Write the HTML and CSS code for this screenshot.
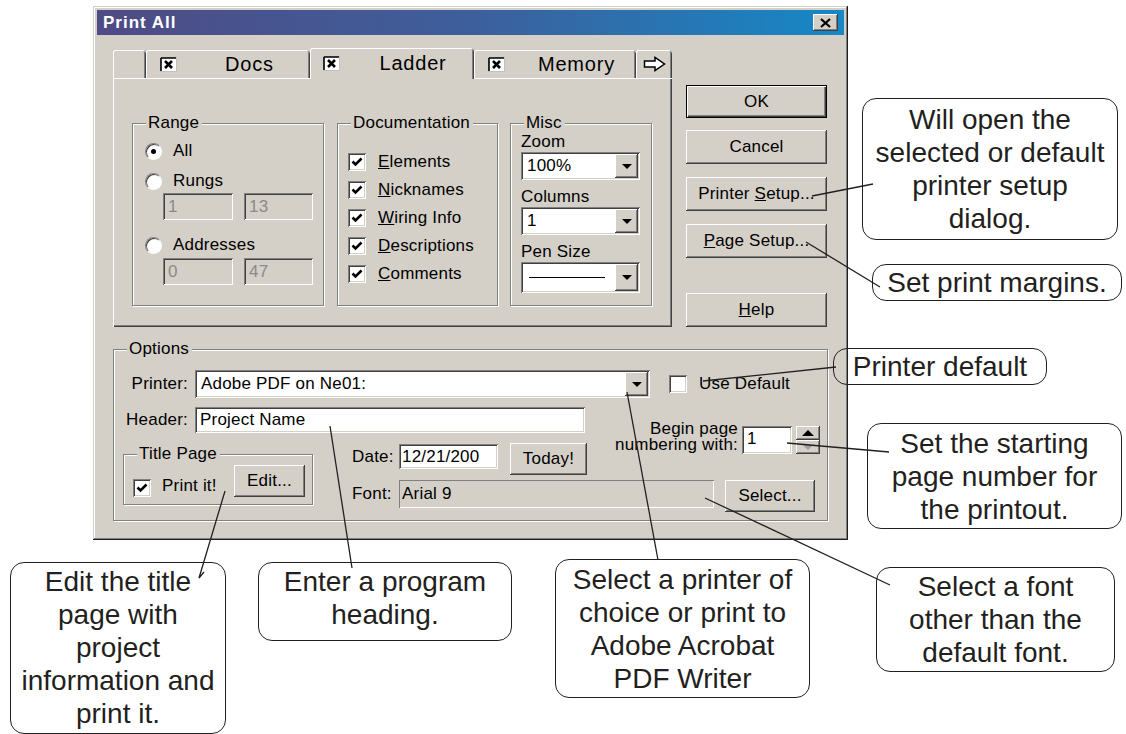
FILE: index.html
```html
<!DOCTYPE html>
<html lang="en">
<head>
  <meta charset="UTF-8" />
  <title>Print All</title>
  <link rel="stylesheet" href="styles.css">
</head>
<body>
<div class="stage">
  <div class="dialog">
    <div class="titlebar">
      <span class="title">Print All</span>
      <span class="close-btn">
        <svg width="11" height="10" viewBox="0 0 11 10"><path d="M1 1 L10 9 M10 1 L1 9" stroke="#000" stroke-width="2.2"/></svg>
      </span>
    </div>

    <div class="dialog-body">
      <div class="top-section">
        <div class="tabs">
          <div class="tab-strip">
            <div class="tab tab-blank"></div>
            <div class="tab tab-docs">
              <span class="tab-check"><svg width="17" height="15" viewBox="0 0 17 15"><rect x="0.5" y="0.5" width="16" height="14" fill="#fff" stroke="#c0c0c0"/><path d="M1 1 H16 M1 1 V14" stroke="#000" stroke-width="1.6"/><path d="M5 4 L12 11 M12 4 L5 11" stroke="#000" stroke-width="2.6"/></svg></span>
              <span class="tab-label">Docs</span>
            </div>
            <div class="tab tab-active">
              <span class="tab-check"><svg width="17" height="15" viewBox="0 0 17 15"><rect x="0.5" y="0.5" width="16" height="14" fill="#fff" stroke="#c0c0c0"/><path d="M1 1 H16 M1 1 V14" stroke="#000" stroke-width="1.6"/><path d="M5 4 L12 11 M12 4 L5 11" stroke="#000" stroke-width="2.6"/></svg></span>
              <span class="tab-label">Ladder</span>
            </div>
            <div class="tab tab-memory">
              <span class="tab-check"><svg width="17" height="15" viewBox="0 0 17 15"><rect x="0.5" y="0.5" width="16" height="14" fill="#fff" stroke="#c0c0c0"/><path d="M1 1 H16 M1 1 V14" stroke="#000" stroke-width="1.6"/><path d="M5 4 L12 11 M12 4 L5 11" stroke="#000" stroke-width="2.6"/></svg></span>
              <span class="tab-label">Memory</span>
            </div>
            <div class="tab tab-arrow">
              <svg width="24" height="16" viewBox="0 0 24 16"><path d="M1.5 5 H12 V1.5 L21.5 8 L12 14.5 V11 H1.5 Z" fill="#fff" stroke="#000" stroke-width="1.5"/></svg>
            </div>
          </div>

          <div class="tab-panel">
            <div class="group range">
              <span class="group-label">Range</span>
              <div class="radio-row"><span class="radio checked"></span>All</div>
              <div class="radio-row rungs"><span class="radio"></span>Rungs</div>
              <div class="range-boxes">
                <span class="field disabled box-a">1</span>
                <span class="field disabled box-b">13</span>
              </div>
              <div class="radio-row addresses"><span class="radio"></span>Addresses</div>
              <div class="range-boxes addr-boxes">
                <span class="field disabled box-a">0</span>
                <span class="field disabled box-b">47</span>
              </div>
            </div>

            <div class="group docs">
              <span class="group-label">Documentation</span>
              <div class="check-row"><span class="check on"></span><span><u>E</u>lements</span></div>
              <div class="check-row"><span class="check on"></span><span><u>N</u>icknames</span></div>
              <div class="check-row"><span class="check on"></span><span><u>W</u>iring Info</span></div>
              <div class="check-row"><span class="check on"></span><span><u>D</u>escriptions</span></div>
              <div class="check-row"><span class="check on"></span><span><u>C</u>omments</span></div>
            </div>

            <div class="group misc">
              <span class="group-label">Misc</span>
              <div class="misc-label">Zoom</div>
              <div class="combo misc-combo"><span class="combo-text">100%</span><span class="drop-btn"><i class="tri"></i></span></div>
              <div class="misc-label spaced">Columns</div>
              <div class="combo misc-combo"><span class="combo-text">1</span><span class="drop-btn"><i class="tri"></i></span></div>
              <div class="misc-label spaced">Pen Size</div>
              <div class="combo misc-combo pen"><span class="combo-text"><i class="pen-line"></i></span><span class="drop-btn"><i class="tri"></i></span></div>
            </div>
          </div>
        </div>

        <div class="buttons">
          <div class="btn btn-default"><span>OK</span></div>
          <div class="btn btn-cancel"><span>Cancel</span></div>
          <div class="btn btn-setup"><span>Printer <u>S</u>etup...</span></div>
          <div class="btn btn-page"><span><u>P</u>age Setup...</span></div>
          <div class="btn btn-help"><span><u>H</u>elp</span></div>
        </div>
      </div>

      <div class="group options">
        <span class="group-label">Options</span>
        <div class="opt-row">
          <span class="opt-label">Printer:</span>
          <div class="combo printer-combo"><span class="combo-text">Adobe PDF on Ne01:</span><span class="drop-btn"><i class="tri"></i></span></div>
          <span class="check use-check"></span>
          <span class="use-text"><u>U</u>se Default</span>
        </div>
        <div class="opt-row header-row">
          <span class="opt-label">Header:</span>
          <span class="field header-field">Project Name</span>
        </div>
        <div class="opt-lower">
          <div class="group title-group">
            <span class="group-label">Title Page</span>
            <span class="check on"></span>
            <span class="print-it">Print it!</span>
            <div class="btn btn-edit"><span>Edit...</span></div>
          </div>
          <div class="right-block">
            <div class="date-row">
              <span class="side-label date-label">Date:</span>
              <span class="field date-field">12/21/200</span>
              <div class="btn btn-today"><span>Today!</span></div>
              <div class="begin">
                <span class="begin-label">Begin page<br>numbering with:</span>
                <span class="field spin-field">1</span>
                <span class="spin">
                  <span class="spin-btn"><i class="tri up"></i></span>
                  <span class="spin-btn"><i class="tri down"></i></span>
                </span>
              </div>
            </div>
            <div class="font-row">
              <span class="side-label">Font:</span>
              <span class="font-field">Arial 9</span>
              <div class="btn btn-select"><span>Select...</span></div>
            </div>
          </div>
        </div>
      </div>
    </div>
  </div>

  <div class="callout c-setup">Will open the<br>selected or default<br>printer setup<br>dialog.</div>
  <div class="callout c-margins">Set print margins.</div>
  <div class="callout c-default">Printer default</div>
  <div class="callout c-start">Set the starting<br>page number for<br>the printout.</div>
  <div class="callout c-font">Select a font<br>other than the<br>default font.</div>
  <div class="callout c-printer">Select a printer of<br>choice or print to<br>Adobe Acrobat<br>PDF Writer</div>
  <div class="callout c-heading">Enter a program<br>heading.</div>
  <div class="callout c-title">Edit the title<br>page with<br>project<br>information and<br>print it.</div>

  <svg class="leaders" width="1126" height="734" viewBox="0 0 1126 734">
    <g stroke="#231f20" stroke-width="1.3" fill="none">
      <line x1="812" y1="196" x2="873" y2="184"/>
      <line x1="806" y1="242" x2="880" y2="287"/>
      <line x1="703" y1="381" x2="836" y2="367"/>
      <line x1="787" y1="443" x2="889" y2="452"/>
      <line x1="705" y1="498" x2="890" y2="585"/>
      <line x1="627" y1="392" x2="658" y2="560"/>
      <line x1="330" y1="426" x2="352" y2="568"/>
      <polyline points="225,491 199,578 204,572"/>
    </g>
  </svg>
</div>
</body>
</html>
```

FILE: styles.css
```css
body {
  margin: 0;
  background: #fff;
  font-family: 'Liberation Sans', Arial, sans-serif;
}

.stage {
  position: relative;
  width: 1126px;
  height: 734px;
  padding: 6px 0 0 93px;
  box-sizing: border-box;
  overflow: hidden;
}

/* ---------- dialog frame ---------- */

.dialog {
  width: 755px;
  height: 534px;
  box-sizing: border-box;
  padding: 4px;
  background: #d4d0c8;
  box-shadow: inset -1px -1px #202020, inset 1px 1px #d4d0c8, inset -2px -2px #808080, inset 2px 2px #fff;
  font-size: 17px;
  letter-spacing: 0.2px;
  color: #000;
}

.titlebar {
  height: 25px;
  display: flex;
  align-items: center;
  justify-content: space-between;
  padding: 0 6px;
  background: linear-gradient(to right, #4f4b85, #3d5f9c 50%, #1688c6);
}

.title {
  color: #fff;
  font-weight: bold;
  font-size: 17px;
  letter-spacing: 1px;
}

.close-btn {
  width: 25px;
  height: 17px;
  display: flex;
  align-items: center;
  justify-content: center;
  background: #d4d0c8;
  box-shadow: inset -1px -1px #404040, inset 1px 1px #fff, inset -2px -2px #808080;
}

.dialog-body {
  padding: 13px 0 0 16px;
}

.top-section {
  display: flex;
  align-items: flex-start;
}

/* ---------- tabs ---------- */

.tabs {
  width: 559px;
}

.tab-strip {
  display: flex;
  align-items: flex-end;
  height: 30px;
}

.tab {
  height: 28px;
  box-sizing: border-box;
  display: flex;
  align-items: center;
  padding-left: 14px;
  border-radius: 3px 3px 0 0;
  box-shadow: inset 1px 0 #fff, inset 0 1px #fff, inset -1px 0 #404040, inset -2px 0 #808080;
  font-size: 20px;
  letter-spacing: 0.8px;
}

.tab-blank { width: 33px; }
.tab-docs { width: 164px; }
.tab-memory { width: 162px; }

.tab-active {
  width: 164px;
  height: 31px;
  margin-bottom: -1px;
  padding-left: 13px;
  position: relative;
  z-index: 1;
  background: #d4d0c8;
}

.tab-arrow {
  width: 36px;
  padding-left: 7px;
}

.tab-check {
  display: flex;
}

.tab-label {
  flex: 1;
  text-align: center;
  padding-left: 12px;
}

.tab-panel {
  height: 249px;
  box-sizing: border-box;
  display: flex;
  align-items: flex-start;
  padding: 45px 0 0 19px;
  box-shadow: inset 1px 1px #fff, inset -1px -1px #404040, inset -2px -2px #808080;
}

/* ---------- group boxes ---------- */

.group {
  position: relative;
  box-sizing: border-box;
  border: 1px solid #808080;
  box-shadow: inset 1px 1px #fff, 1px 1px #fff;
}

.group-label {
  position: absolute;
  top: -10px;
  left: 13px;
  padding: 0 3px 0 2px;
  line-height: 18px;
  background: #d4d0c8;
}

.range {
  width: 192px;
  height: 183px;
  padding: 18px 0 0 12px;
}

.docs {
  width: 161px;
  height: 183px;
  margin-left: 13px;
  padding: 29px 0 0 10px;
  display: flex;
  flex-direction: column;
  gap: 10px;
}

.misc {
  width: 142px;
  height: 183px;
  margin-left: 12px;
  padding: 9px 0 0 10px;
}

/* radios */

.radio-row {
  display: flex;
  align-items: center;
  gap: 11px;
  height: 18px;
}

.radio-row.rungs { margin-top: 12px; }
.radio-row.addresses { margin-top: 16px; }

.radio {
  width: 17px;
  height: 17px;
  box-sizing: border-box;
  border-radius: 50%;
  background: #fff;
  border: 1px solid;
  border-color: #808080 #fff #fff #808080;
  box-shadow: inset 1px 1px #404040;
  display: flex;
  align-items: center;
  justify-content: center;
}

.radio.checked::after {
  content: "";
  width: 5px;
  height: 5px;
  border-radius: 50%;
  background: #000;
}

.range-boxes {
  display: flex;
  gap: 11px;
  margin: 3px 0 0 18px;
}

.range-boxes.addr-boxes { margin-top: 4px; }

/* fields */

.field {
  box-sizing: border-box;
  display: flex;
  align-items: center;
  padding-left: 5px;
  background: #fff;
  box-shadow: inset 1px 1px #808080, inset -1px -1px #fff, inset 2px 2px #404040, inset -2px -2px #d4d0c8;
}

.field.disabled {
  background: #d4d0c8;
  color: #8a8a8a;
}

.box-a { width: 70px; height: 27px; }
.box-b { width: 69px; height: 27px; }

/* checkboxes */

.check-row {
  display: flex;
  align-items: center;
  gap: 12px;
  height: 18px;
}

.check {
  width: 18px;
  height: 18px;
  flex: none;
  box-sizing: border-box;
  background: #fff;
  box-shadow: inset 1px 1px #808080, inset -1px -1px #fff, inset 2px 2px #404040, inset -2px -2px #d4d0c8;
}

.check.on {
  background: #fff url("data:image/svg+xml,%3Csvg xmlns='http://www.w3.org/2000/svg' width='18' height='18' viewBox='0 0 18 18'%3E%3Cpath d='M4.5 8.5 L7.5 11.5 L13.5 5.5' fill='none' stroke='%23000' stroke-width='2.6'/%3E%3C/svg%3E") no-repeat center;
}

/* combo boxes */

.combo {
  box-sizing: border-box;
  display: flex;
  padding: 2px;
  background: #fff;
  box-shadow: inset 1px 1px #808080, inset -1px -1px #fff, inset 2px 2px #404040, inset -2px -2px #d4d0c8;
}

.combo-text {
  flex: 1;
  display: flex;
  align-items: center;
  padding-left: 4px;
}

.drop-btn {
  width: 23px;
  display: flex;
  align-items: center;
  justify-content: center;
  background: #d4d0c8;
  box-shadow: inset -1px -1px #404040, inset 1px 1px #fff, inset -2px -2px #808080;
}

.tri {
  width: 0;
  height: 0;
  border-left: 5px solid transparent;
  border-right: 5px solid transparent;
  border-top: 5px solid #000;
}

.misc-label {
  line-height: 18px;
}

.misc-label.spaced { margin-top: 8px; }

.misc-combo {
  width: 119px;
  height: 28px;
  margin-top: 1px;
}

.misc-combo.pen { height: 31px; }

.pen-line {
  width: 76px;
  height: 1px;
  background: #000;
  margin-left: 2px;
}

/* ---------- buttons ---------- */

.buttons {
  width: 141px;
  margin-left: 14px;
  padding-top: 37px;
}

.btn {
  box-sizing: border-box;
  height: 34px;
  display: flex;
  align-items: center;
  justify-content: center;
  background: #d4d0c8;
  box-shadow: inset -1px -1px #404040, inset 1px 1px #fff, inset -2px -2px #808080;
}

.btn-default {
  height: 33px;
  box-shadow: inset 0 0 0 1px #000, inset 2px 2px #fff, inset -2px -2px #404040, inset -3px -3px #808080;
}

.btn-cancel { margin-top: 12px; }
.btn-setup { margin-top: 13px; }
.btn-page { margin-top: 13px; }
.btn-help { margin-top: 35px; }

/* ---------- options ---------- */

.options {
  width: 715px;
  height: 172px;
  margin-top: 22px;
  padding-top: 20px;
}

.opt-row {
  display: flex;
  align-items: center;
  height: 28px;
}

.header-row {
  height: 26px;
  margin-top: 9px;
}

.opt-label {
  width: 74px;
  margin-right: 7px;
  text-align: right;
}

.printer-combo {
  width: 455px;
  height: 28px;
}

.use-check {
  margin-left: 19px;
}

.use-text {
  margin-left: 12px;
}

.use-text u {
  text-decoration: none;
}

.header-field {
  width: 390px;
  height: 26px;
}

.opt-lower {
  display: flex;
  align-items: flex-start;
}

.title-group {
  width: 190px;
  height: 51px;
  margin: 21px 0 0 9px;
  padding: 0 7px 7px 9px;
  display: flex;
  align-items: flex-end;
}

.print-it {
  margin: 0 0 1px 11px;
}

.btn-edit {
  width: 71px;
  height: 32px;
  margin-left: auto;
}

.right-block {
  width: 468px;
  margin: -7px 0 0 39px;
}

.date-row {
  display: flex;
  align-items: flex-start;
  height: 49px;
}

.side-label {
  width: 47px;
  line-height: 28px;
}

.date-label {
  margin-top: 17px;
}

.date-field {
  width: 99px;
  height: 25px;
  margin-top: 18px;
  padding-left: 3px;
}

.btn-today {
  width: 77px;
  height: 32px;
  margin: 17px 0 0 12px;
}

.begin {
  margin-left: auto;
  display: flex;
  align-items: flex-start;
}

.begin-label {
  text-align: right;
  line-height: 16px;
  margin-top: -5px;
}

.spin-field {
  width: 50px;
  height: 28px;
  margin-left: 4px;
  align-items: flex-start;
  padding-top: 3px;
}

.spin {
  width: 24px;
  height: 28px;
  margin-left: 4px;
  display: flex;
  flex-direction: column;
}

.spin-btn {
  flex: 1;
  display: flex;
  align-items: center;
  justify-content: center;
  background: #d4d0c8;
  box-shadow: inset -1px -1px #404040, inset 1px 1px #fff, inset -2px -2px #808080;
}

.tri.up {
  border-top: 0;
  border-bottom: 6px solid #000;
  border-left-width: 6px;
  border-right-width: 6px;
}

.tri.down {
  border-top-color: #a0a0a0;
}

.font-row {
  display: flex;
  align-items: flex-start;
  margin-top: 5px;
}

.font-field {
  width: 315px;
  height: 28px;
  box-sizing: border-box;
  display: flex;
  align-items: center;
  padding-left: 3px;
  box-shadow: inset 1px 1px #808080, inset -1px -1px #fff;
}

.btn-select {
  width: 90px;
  height: 32px;
  margin-left: 11px;
}

/* ---------- annotations ---------- */

.callout {
  position: absolute;
  box-sizing: border-box;
  display: flex;
  align-items: center;
  justify-content: center;
  border: 1.5px solid #231f20;
  border-radius: 14px;
  color: #231f20;
  font-size: 28px;
  line-height: 33px;
  text-align: center;
}

.c-setup { left: 862px; top: 98px; width: 256px; height: 142px; }
.c-margins { left: 872px; top: 264px; width: 250px; height: 37px; }
.c-default { left: 833px; top: 348px; width: 214px; height: 37px; }
.c-start { left: 867px; top: 423px; width: 255px; height: 106px; }
.c-font { left: 876px; top: 567px; width: 239px; height: 105px; }
.c-printer { left: 555px; top: 559px; width: 255px; height: 139px; }
.c-heading { left: 258px; top: 562px; width: 254px; height: 79px; align-items: flex-start; padding-top: 2px; }
.c-title { left: 10px; top: 562px; width: 216px; height: 172px; align-items: flex-start; padding-top: 2px; }

.leaders {
  position: absolute;
  left: 0;
  top: 0;
  pointer-events: none;
}
```
